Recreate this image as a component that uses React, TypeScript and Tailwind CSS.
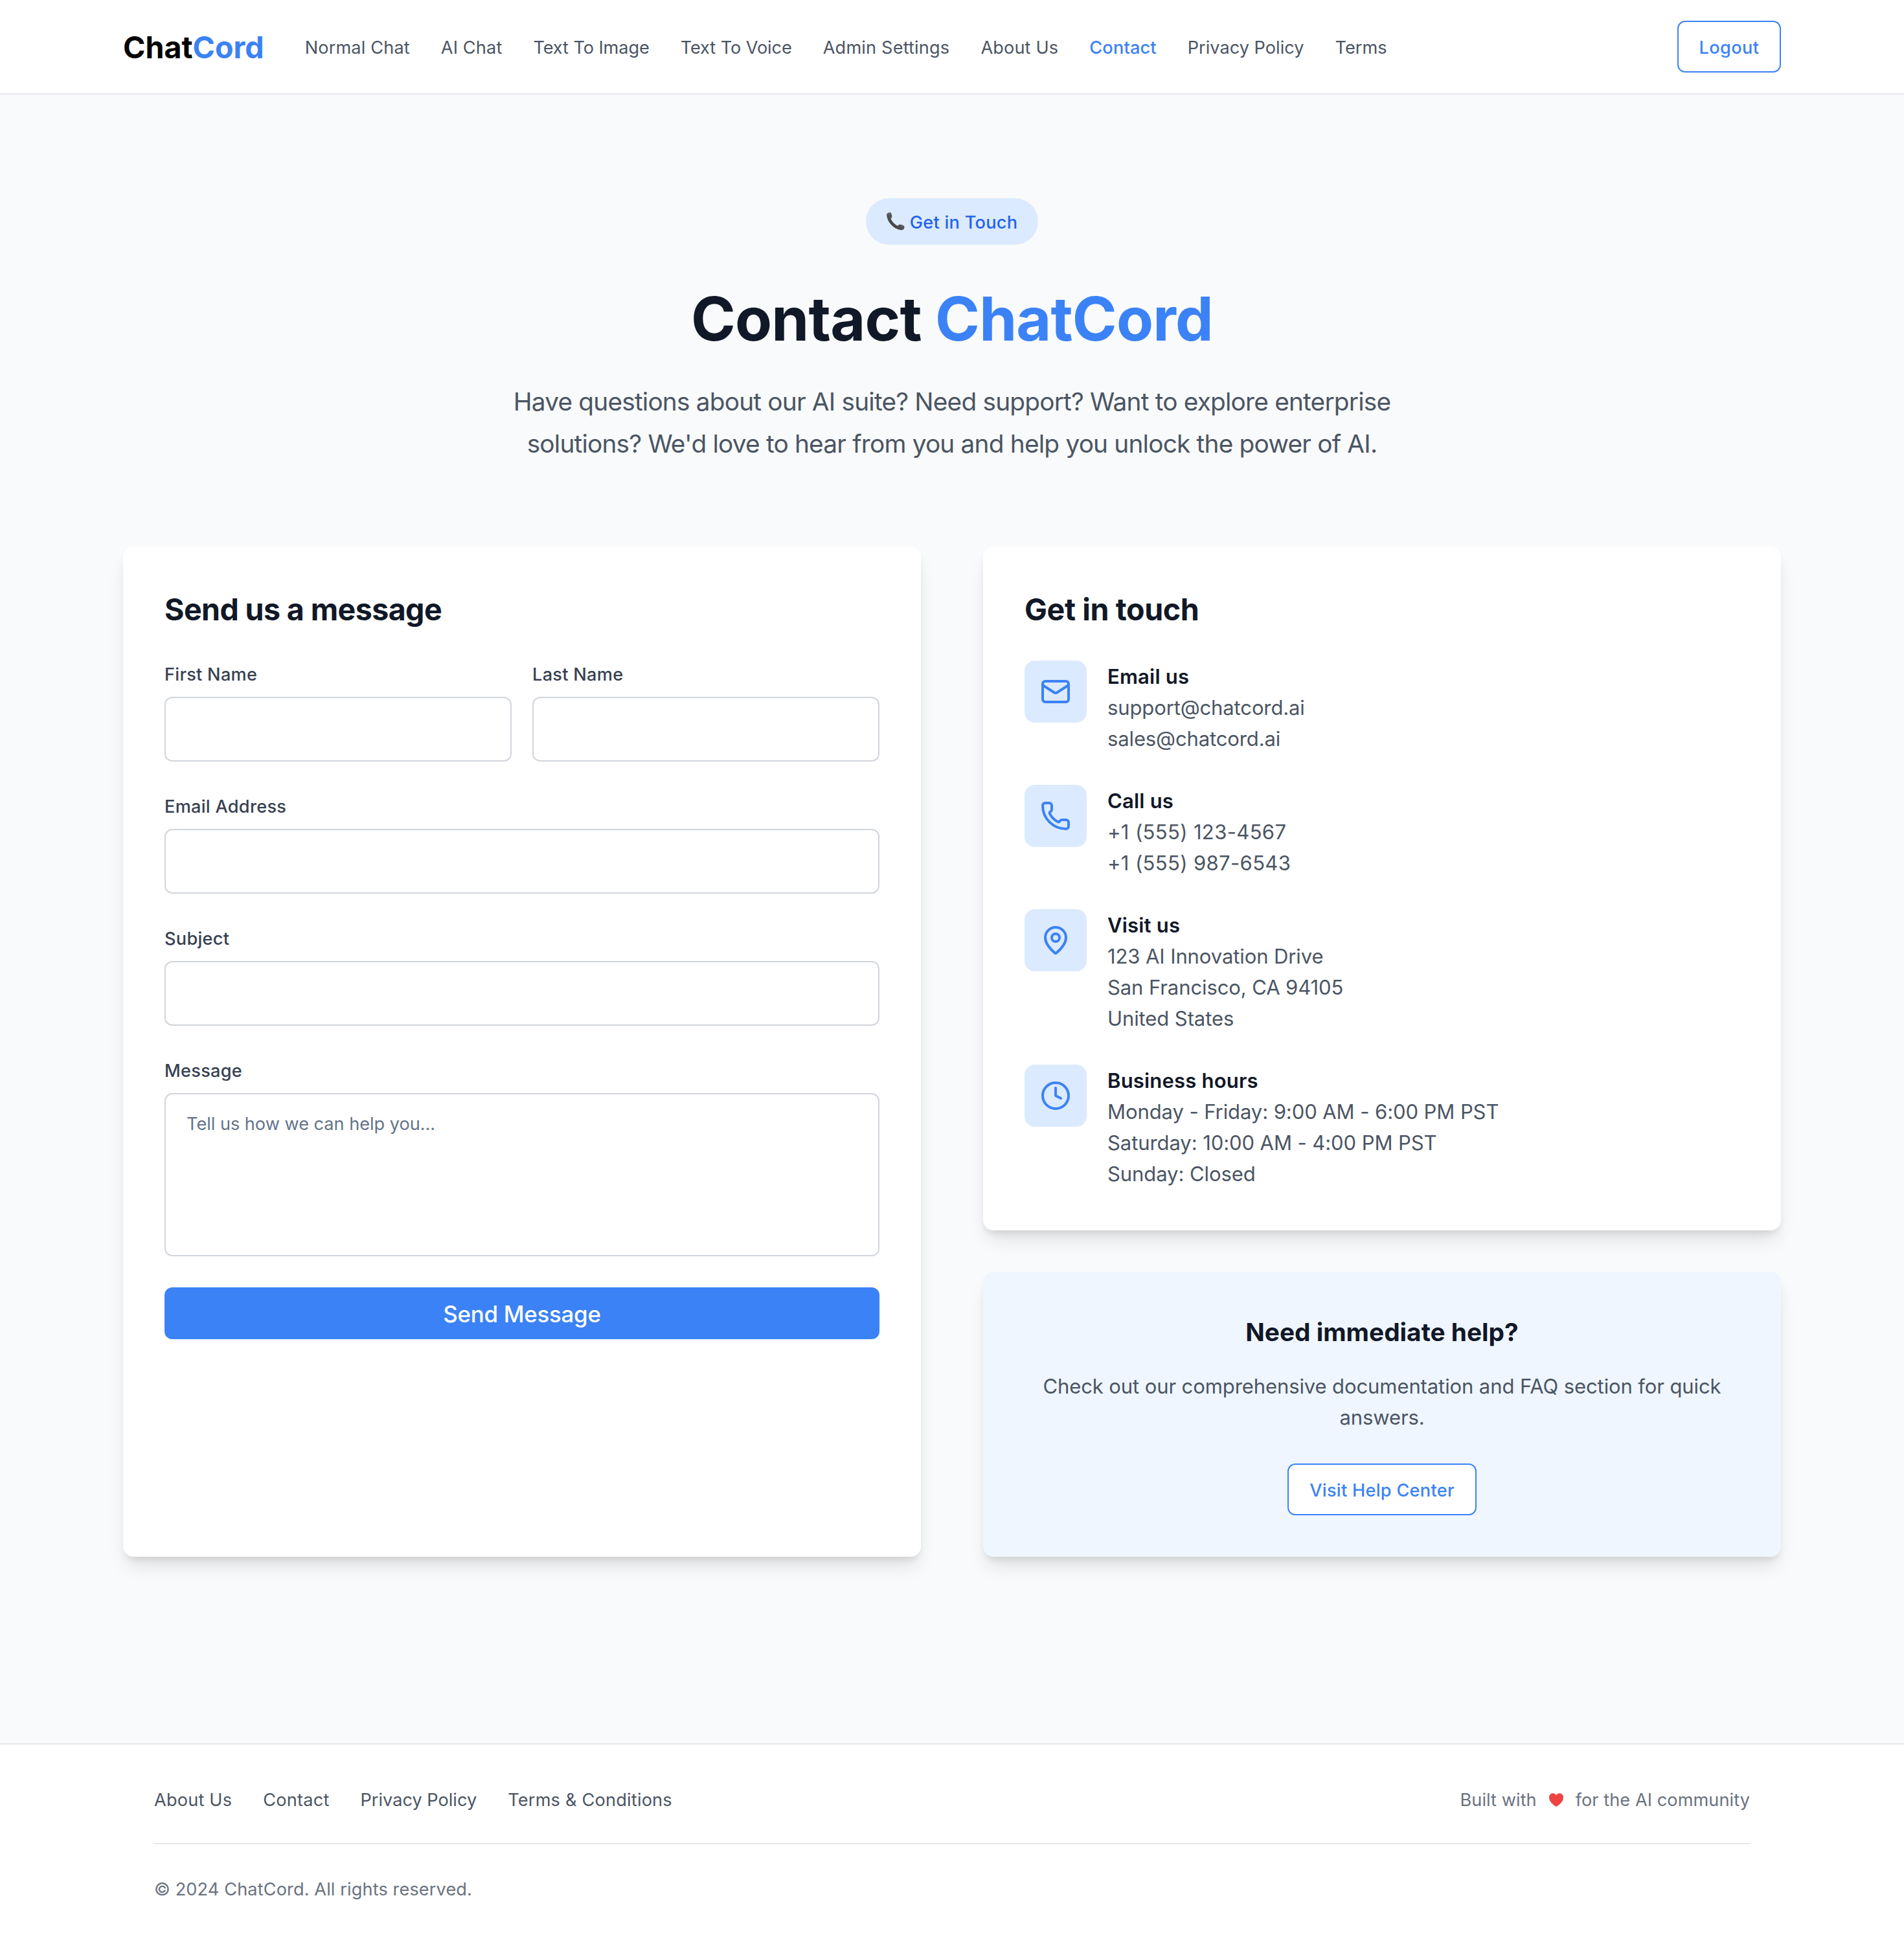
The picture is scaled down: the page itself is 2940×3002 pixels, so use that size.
import React from "react";
import { Clock, Mail, MapPin, Phone } from "lucide-react";

const navItems = [
  { label: "Normal Chat", style: "tracking-[0.005em]" },
  { label: "AI Chat", style: "tracking-[0.005em]" },
  { label: "Text To Image", style: "tracking-[-0.004em]" },
  { label: "Text To Voice", style: "tracking-[-0.004em]" },
  { label: "Admin Settings", style: "tracking-[0.006em]" },
  { label: "About Us", style: "tracking-[0.005em]" },
  { label: "Contact", style: "font-medium tracking-[0.006em] text-[#3b82f6]" },
  { label: "Privacy Policy", style: "tracking-normal" },
  { label: "Terms", style: "tracking-[0.002em]" },
];

const contactItems = [
  {
    icon: Mail,
    title: "Email us",
    tracking: "tracking-[-0.0045em]",
    lines: ["support@chatcord.ai", "sales@chatcord.ai"],
  },
  {
    icon: Phone,
    title: "Call us",
    tracking: "tracking-[0.011em]",
    lines: ["+1 (555) 123-4567", "+1 (555) 987-6543"],
  },
  {
    icon: MapPin,
    title: "Visit us",
    tracking: "tracking-[-0.0035em]",
    lines: ["123 AI Innovation Drive", "San Francisco, CA 94105", "United States"],
  },
  {
    icon: Clock,
    title: "Business hours",
    tracking: "tracking-[-0.003em]",
    lines: [
      "Monday - Friday: 9:00 AM - 6:00 PM PST",
      "Saturday: 10:00 AM - 4:00 PM PST",
      "Sunday: Closed",
    ],
  },
];

const cardShadow =
  "shadow-[0_20px_30px_-6px_rgba(0,0,0,0.1),0_8px_12px_-4px_rgba(0,0,0,0.1)]";

const labelClass =
  "mb-4 block h-10 text-[27.16px] leading-[43px] font-medium tracking-[0.01em] text-[#374151]";

const outlineButton =
  "h-20 rounded-xl border-2 border-[#3b82f6] bg-white pt-[3px] text-center text-[27.16px] leading-[40px] font-medium whitespace-nowrap text-[#3b82f6]";

function Receiver() {
  return (
    <svg viewBox="0 0 28 28" className="h-7 w-7 shrink-0">
      <defs>
        <linearGradient id="receiver" x1="0" y1="1" x2="1" y2="0">
          <stop offset="0" stopColor="#2b2b2b" />
          <stop offset="0.5" stopColor="#555555" />
          <stop offset="1" stopColor="#3a3a3a" />
        </linearGradient>
      </defs>
      <path
        d="M1.2 1.6C2.6.3 5 0 6.3.6c1 .5 1.700 2.800 2 5.400.2 1.500-.2 2.300-1.300 2.900-.6.4-.5 1 .1 2.100 2 3.700 5.100 7 8.700 9.200.9.5 1.500.5 2-.1.8-1.200 1.600-1.600 3-1.400 2.700.3 5.200 1.200 6.200 2.300 1 1.100.5 3.600-.7 5-.9 1.100-2.600 1.500-4.700 1.200C11.600 25.700 1.900 16 .3 5.700.1 4 .3 2.400 1.200 1.600Z"
        fill="url(#receiver)"
      />
      <path
        d="M2.600 3.200c1-.9 2.300-1.200 3-.9M23.500 20.500c1.200.3 2.200.8 2.600 1.400"
        stroke="#7d7d7d"
        strokeWidth="1"
        fill="none"
        strokeLinecap="round"
      />
    </svg>
  );
}

function Field({ label }: { label: string }) {
  return (
    <div>
      <label className={labelClass}>{label}</label>
      <input className="block h-[100px] w-full rounded-xl border-2 border-[#d1d5db] bg-white px-8 text-[27.16px] outline-none" />
    </div>
  );
}

export default function App() {
  return (
    <div className="flex min-h-[3002px] w-full flex-col bg-[#f9fafb] font-['Inter',sans-serif] text-[#111827] antialiased">
      <header className="border-b-2 border-[#e5e7eb] bg-white">
        <div className="mx-auto flex h-36 w-[2560px] items-center">
          <div className="pt-0.5 text-[46.56px] leading-[64px] font-bold text-black">
            Chat<span className="text-[#3b82f6]">Cord</span>
          </div>
          <nav className="ml-[63px] flex gap-12 pt-[3px] text-[27.16px] leading-[40px] text-[#4b5563]">
            {navItems.map(({ label, style }) => (
              <a key={label} className={style}>
                {label}
              </a>
            ))}
          </nav>
          <button className={`ml-auto w-40 tracking-[0.0137em] ${outlineButton}`}>Logout</button>
        </div>
      </header>

      <main className="mx-auto w-[2560px] grow pt-40">
        <section className="flex flex-col items-center text-center">
          <div className="flex h-[72px] items-center gap-2 rounded-full bg-[#dbeafe] px-8 text-[27.16px] leading-[40px] font-medium tracking-[0.009em] text-[#2563eb]">
            <Receiver />
            <span className="pt-[3px]">Get in Touch</span>
          </div>
          <h1 className="mt-16 h-24 text-[93.12px] leading-[100px] font-bold tracking-[-0.0086em]">
            Contact <span className="text-[#3b82f6]">ChatCord</span>
          </h1>
          <p className="mt-12 h-[130px] w-[1500px] pt-px text-[38.8px] leading-[65px] tracking-[-0.0207em] text-[#4b5563]">
            Have questions about our AI suite? Need support? Want to explore enterprise
            <br />
            solutions? We'd love to hear from you and help you unlock the power of AI.
          </p>
        </section>

        <section className="mt-32 grid h-[1560px] grid-cols-2 gap-24">
          <div className={`rounded-2xl bg-white p-16 ${cardShadow}`}>
            <h2 className="h-16 text-[46.56px] leading-[66px] font-bold tracking-[-0.0128em]">
              Send us a message
            </h2>
            <form className="mt-12 flex flex-col gap-12">
              <div className="grid grid-cols-2 gap-8">
                <Field label="First Name" />
                <Field label="Last Name" />
              </div>
              <Field label="Email Address" />
              <Field label="Subject" />
              <div>
                <label className={labelClass}>Message</label>
                <textarea
                  placeholder="Tell us how we can help you..."
                  className="block h-[252px] w-full resize-none rounded-xl border-2 border-[#d1d5db] bg-white px-8 pt-[25.5px] text-[27.16px] leading-[40px] tracking-[-0.001em] outline-none placeholder:text-[#64748b]"
                />
              </div>
              <button
                type="button"
                className="h-20 w-full rounded-xl bg-[#3b82f6] pt-0.5 text-[34.92px] leading-[56px] font-medium tracking-[-0.0085em] text-white"
              >
                Send Message
              </button>
            </form>
          </div>

          <div className="flex flex-col gap-16">
            <div className={`h-[1056px] rounded-2xl bg-white p-16 ${cardShadow}`}>
              <h2 className="h-16 text-[46.56px] leading-[66px] font-bold tracking-[-0.008em]">
                Get in touch
              </h2>
              <div className="mt-12 flex flex-col gap-12">
                {contactItems.map(({ icon: Icon, title, tracking, lines }) => (
                  <div key={title} className="flex gap-8">
                    <div className="flex h-24 w-24 shrink-0 items-center justify-center rounded-2xl bg-[#dbeafe]">
                      <Icon className="h-12 w-12 text-[#3b82f6]" strokeWidth={2} />
                    </div>
                    <div className="-mb-[0.5px] pt-[0.5px] text-[31.04px] leading-[48px] text-[#4b5563]">
                      <h3 className="font-semibold tracking-[0.006em] text-[#111827]">{title}</h3>
                      {lines.map((line) => (
                        <p key={line} className={tracking}>
                          {line}
                        </p>
                      ))}
                    </div>
                  </div>
                ))}
              </div>
            </div>

            <div
              className={`flex h-[440px] flex-col items-center rounded-2xl bg-[#eff6ff] p-16 text-center ${cardShadow}`}
            >
              <h3 className="h-14 text-[38.8px] leading-[57px] font-bold">Need immediate help?</h3>
              <p className="mt-8 h-24 pt-[0.5px] text-[31.04px] leading-[48px] tracking-[-0.0037em] text-[#4b5563]">
                Check out our comprehensive documentation and FAQ section for quick
                <br />
                answers.
              </p>
              <button className={`mt-12 w-[292px] tracking-[0.0103em] ${outlineButton}`}>
                Visit Help Center
              </button>
            </div>
          </div>
        </section>
      </main>

      <footer className="h-[310px] border-t-2 border-[#e5e7eb] bg-white">
        <div className="mx-auto w-[2464px] pt-16 text-[27.16px] leading-[43px]">
          <div className="flex h-[90px] items-start justify-between border-b-2 border-[#e5e7eb]">
            <nav className="flex gap-12 tracking-[0.007em] text-[#4b5563]">
              <a>About Us</a>
              <a>Contact</a>
              <a className="tracking-normal">Privacy Policy</a>
              <a>Terms &amp; Conditions</a>
            </nav>
            <div className="flex items-center tracking-[0.002em] text-[#6b7280]">
              <span>Built with</span>
              <svg viewBox="0 0 22 21" className="mx-[19px] h-[21px] w-[22px]" fill="#ef4444">
                <path d="M11 20.900C9.600 20.400 0 14.300 0 7 0 2.900 2.500.2 5.900.2 8.100.2 10 1.400 11 3.400 12 1.400 13.900.2 16.100.2 19.500.2 22 2.900 22 7c0 7.300-9.600 13.400-11 13.900Z" />
              </svg>
              <span>for the AI community</span>
            </div>
          </div>
          <p className="mt-12 tracking-[0.004em] text-[#6b7280]">
            © 2024 ChatCord. All rights reserved.
          </p>
        </div>
      </footer>
    </div>
  );
}
